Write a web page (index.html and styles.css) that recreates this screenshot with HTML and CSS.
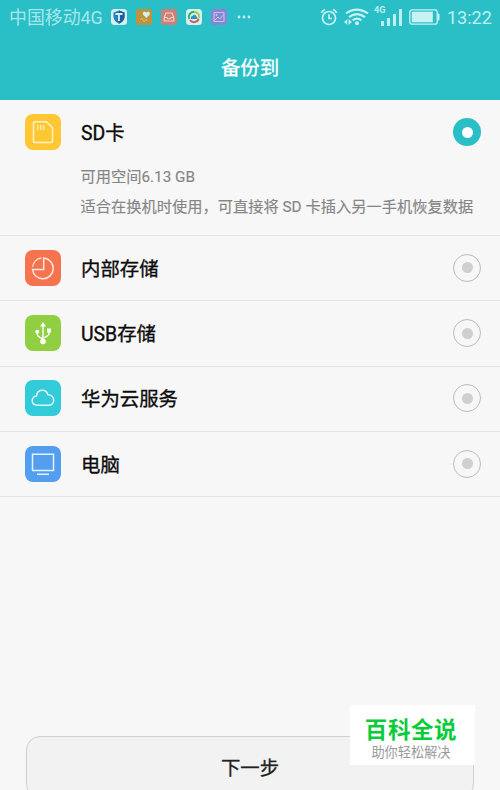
FILE: index.html
```
<!DOCTYPE html>
<html lang="zh-CN">
<head>
<meta charset="utf-8">
<title>备份到</title>
<link rel="stylesheet" href="styles.css">
</head>
<body>
<div class="screen">
  <header class="top">
    <div class="status">
      <span class="carrier">中国移动4G</span>
      <div class="notices">
        <svg viewBox="0 0 16 16"><rect width="16" height="16" rx="3.5" fill="#d5f1f3"/><path d="M8 1.500l5.500 2V8c0 3-2.500 5.300-5.500 6.700C5 13.300 2.500 11 2.500 8V3.500z" fill="#287fbd"/><path d="M8 1.500l5.500 2V8c0 3-2.500 5.300-5.500 6.700z" fill="#1c609c"/><path d="M4.500 5h7M8 5v7" stroke="#dceff5" stroke-width="1.800"/></svg>
        <svg viewBox="0 0 16 16"><rect width="16" height="16" rx="3" fill="#bd943b"/><path d="M10.300 9L7.400 6C5.500 3.700 8.500 1.400 10.300 3.600c1.800-2.200 4.900.1 3 2.400z" fill="#d5f1e8"/><path d="M4 11l2-2 2 4 2-3 1 2" fill="none" stroke="#d7c18b" stroke-width=".8"/></svg>
        <svg viewBox="0 0 16 16"><rect width="16" height="16" rx="3" fill="#cc8075"/><path d="M5 4h6l1.800 4.500V12H3.200V8.500zM3.200 8.500H6c.3 2 3.700 2 4 0h2.800" fill="none" stroke="#edd2cb" stroke-width="1.200"/></svg>
        <svg viewBox="0 0 16 16"><rect width="16" height="16" rx="3.500" fill="#d5f1f3"/><g fill="none" stroke-width="2"><path d="M3.200 10A5.200 5.200 0 0 1 8 2.800" stroke="#39ad68"/><path d="M8 2.800A5.200 5.200 0 0 1 13.200 9" stroke="#9bd449"/><path d="M12.800 10A5.200 5.200 0 0 1 4 11.200" stroke="#d45b50"/></g><path d="M5 10c-1-2 .7-3 1.500-3C8 4.500 10.500 6 10.300 7.500 12 8 11.600 10 11 10z" fill="#338fc7"/></svg>
        <svg viewBox="0 0 16 16"><rect width="16" height="16" rx="3" fill="#8885d5"/><path d="M3 3.500h10v9H3zM3 12l4-4 2 2 4-5" fill="none" stroke="#c4c4ef"/><circle cx="5.500" cy="6" r="1" fill="#c4c4ef"/></svg>
      </div>
      <svg class="more" viewBox="0 0 14 4"><g fill="#c8f2f3"><circle cx="2" cy="2" r="1.400"/><circle cx="7" cy="2" r="1.400"/><circle cx="12" cy="2" r="1.400"/></g></svg>
      <svg class="alarm" viewBox="0 0 18 18"><g fill="none" stroke="#c8f2f3" stroke-width="1.700"><circle cx="9" cy="10" r="6.500"/><path d="M9 6.200V10.500h3M1.300 4.800Q2.500 2.500 5 1.500M16.700 4.800Q15.500 2.500 13 1.500"/></g></svg>
      <svg class="wifi" viewBox="0 0 25 18"><g fill="none" stroke="#c8f2f3" stroke-width="2.100"><path d="M2 5.500Q12.500-2.300 24 5.500M5 9.200Q12.900 3.200 21 9.200M8.700 12.400Q13 9 17.300 12.400"/></g><circle cx="13" cy="15.300" r="2" fill="#c8f2f3"/><path d="M3.300 11v6L0 14zM4.600 11v6l3.300-3z" fill="#c8f2f3"/></svg>
      <div class="signal">
        <span class="net">4G</span>
        <i class="bar b1"></i><i class="bar b2"></i><i class="bar b3"></i><i class="bar b4"></i>
      </div>
      <svg class="battery" viewBox="0 0 31 16"><rect x=".8" y=".8" width="27.400" height="14.400" rx="2.300" fill="none" stroke="#c8f2f3" stroke-width="1.300"/><rect x="2.800" y="2.700" width="21" height="10.600" fill="#c8f2f3"/><path d="M28.500 4.500h1q1 0 1 1v5q0 1-1 1h-1z" fill="#c8f2f3"/></svg>
      <span class="clock">13:22</span>
    </div>
    <h1 class="title">备份到</h1>
  </header>

  <main class="list">
    <section class="item first">
      <div class="row">
        <svg class="icon" viewBox="0 0 36 36"><rect width="36" height="36" rx="8" fill="#ffc733"/><g fill="none" stroke="#fff2ca" stroke-width="1.500"><path d="M9.500 7.700h12l6 6v13.800q0 1-1 1h-17q-1 0-1-1V8.700q0-1 1-1z"/><path d="M12.800 11v5M15.700 11v5M18.600 11v5" stroke-width="1.200"/></g></svg>
        <span class="label">SD卡</span>
        <span class="radio on"></span>
      </div>
      <p class="note">可用空间6.13 GB</p>
      <p class="note">适合在换机时使用，可直接将 SD 卡插入另一手机恢复数据</p>
    </section>
    <section class="item"><div class="row">
      <svg class="icon" viewBox="0 0 36 36"><rect width="36" height="36" rx="8" fill="#f5734e"/><g fill="none" stroke="#ffe9df" stroke-width="1.500"><path d="M7.500 19.500H18.700V8A10.400 10.400 0 1 1 7.500 19.500z"/><path d="M7.500 17A10.500 10.500 0 0 1 16.500 7.800" stroke-width="1.200"/></g></svg>
      <span class="label">内部存储</span><span class="radio"></span>
    </div></section>
    <section class="item"><div class="row">
      <svg class="icon" viewBox="0 0 36 36"><rect width="36" height="36" rx="8" fill="#90cf42"/><g fill="none" stroke="#fff" stroke-width="1.400"><path d="M18 10v17M12.300 17v2q0 2 2 3l3.700 2.200M24 16v2.200q0 2-2 3L18 23.500"/></g><path d="M18 7l3 4.500h-6z" fill="#fff"/><circle cx="12.300" cy="16.800" r="2" fill="#fff"/><path d="M22 13.500h4v4h-4z" fill="#fff"/><circle cx="18" cy="26.500" r="2.800" fill="#fff"/></svg>
      <span class="label">USB存储</span><span class="radio"></span>
    </div></section>
    <section class="item"><div class="row">
      <svg class="icon" viewBox="0 0 36 36"><rect width="36" height="36" rx="8" fill="#31cbda"/><path d="M12.500 25.300C5.500 25.300 5.800 16.500 11.500 15.900C12.500 8.800 21 8.600 23 14.800C30.500 15 30.500 25.300 23.500 25.300z" fill="none" stroke="#e2fbfc" stroke-width="1.500"/></svg>
      <span class="label">华为云服务</span><span class="radio"></span>
    </div></section>
    <section class="item"><div class="row">
      <svg class="icon" viewBox="0 0 36 36"><rect width="36" height="36" rx="8" fill="#539eef"/><path d="M7.500 8.300h21v16.200h-21zM12 28.300h12" fill="none" stroke="#e5f2ff" stroke-width="1.500"/></svg>
      <span class="label">电脑</span><span class="radio"></span>
    </div></section>
  </main>

  <button class="next">下一步</button>
  <aside class="badge">
    <strong class="brand">百科全说</strong>
    <span class="slogan">助你轻松解决</span>
  </aside>
</div>
</body>
</html>
```
FILE: styles.css
```
* { box-sizing: border-box; }
body { margin: 0; overflow: hidden; font-family: Roboto, "Noto Sans CJK SC", sans-serif; }
.screen {
  position: relative;
  display: flex;
  flex-direction: column;
  height: 790px;
  overflow: hidden;
  background: #f7f7f7;
}
.top { height: 100px; flex: none; background: #2abfc7; }
.status { display: flex; align-items: center; height: 34px; padding: 0 8px 0 9px; color: #c0eff1; }
.status svg { display: block; flex: none; }
.carrier { width: 94px; margin-right: 7.5px; font-size: 17.9px; line-height: 34px; padding-top: 1px; white-space: nowrap; color: #a9e6e9; }
.notices { display: flex; gap: 9.1px; }
.notices svg { width: 16px; height: 16px; }
.more { width: 14px; height: 4px; margin-left: 10px; }
.alarm { width: 18px; height: 18px; margin-left: auto; margin-right: 6px; }
.wifi { width: 25px; height: 18px; margin-right: 5px; }
.signal { position: relative; display: flex; align-items: flex-end; gap: 3px; width: 28px; height: 18px; padding-left: 7px; margin-right: 7px; }
.net { position: absolute; left: 0; top: -4px; font-size: 9px; font-weight: 700; line-height: 12px; }
.bar { width: 3px; flex: none; background: #c0eff1; }
.b1 { height: 5px; }
.b2 { height: 8px; }
.b3 { height: 12px; }
.b4 { height: 17px; }
.battery { width: 31px; height: 16px; margin-right: 7px; }
.clock { width: 45px; padding-top: 1px; font-size: 18px; line-height: 34px; white-space: nowrap; }
.title { margin: 0; height: 66px; padding-top: 2px; line-height: 66px; font-size: 19.4px; font-weight: 400; -webkit-text-stroke: .3px; text-align: center; color: #fff; }
.list { flex: none; }
.item { height: 65.25px; border-bottom: 1px solid #e4e4e4; }
.item.first { height: 136px; }
.row { display: flex; align-items: center; height: 63.5px; padding: 0 19px 0 25px; }
.icon { width: 36px; height: 36px; flex: none; margin-right: 20px; }
.label { flex: 1; font-size: 19.4px; font-weight: 400; -webkit-text-stroke: .35px; line-height: 30px; padding-top: 4px; color: #0b0b0b; }
.radio { display: grid; place-items: center; width: 28px; height: 28px; border: 1px solid #bcbcbc; border-radius: 50%; }
.radio::after { content: ""; width: 11px; height: 11px; border-radius: 50%; background: #cfcfcf; }
.radio.on { border: 0; background: #2abfc7; }
.radio.on::after { background: #fff; }
.note { margin: 0 0 0 80.500px; font-size: 15.25px; line-height: 30px; color: #858585; -webkit-text-stroke: .15px; white-space: nowrap; }
.first .row { height: 64.5px; margin-bottom: -3px; }
.next {
  flex: none;
  width: 448px;
  height: 62px;
  margin: auto 26px -8px;
  padding: 0;
  border: 1px solid #cfcfcf;
  border-radius: 14px;
  background: #f2f2f2;
  color: #222;
  font: 400 19.4px/64px Roboto, "Noto Sans CJK SC", sans-serif;
  -webkit-text-stroke: .3px;
}
.badge {
  position: absolute;
  left: 350px;
  top: 705px;
  width: 125px;
  height: 60px;
  padding: 10px 3px 0 0;
  background: #fff;
  text-align: center;
}
.brand { display: block; font-size: 22.5px; line-height: 31px; font-weight: 700; letter-spacing: .6px; color: #08cc38; }
.slogan { display: block; font-size: 13.2px; line-height: 13px; color: #999; }
```
